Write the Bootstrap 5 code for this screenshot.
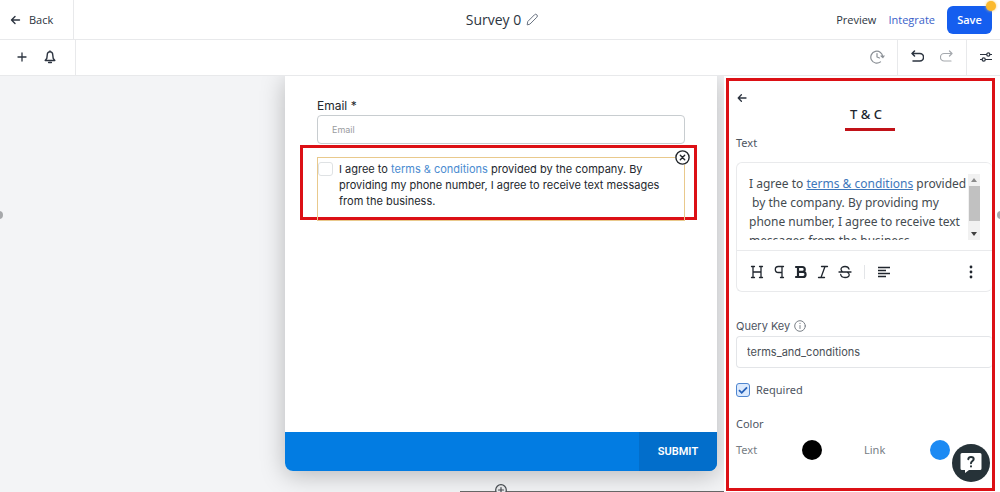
<!DOCTYPE html>
<html lang="en">
<head>
<meta charset="utf-8">
<meta name="viewport" content="width=device-width, initial-scale=1">
<title>Survey 0</title>
<link href="https://cdn.jsdelivr.net/npm/bootstrap@5.3.0/dist/css/bootstrap.min.css" rel="stylesheet">
<style>
  :root { --ui: "Noto Sans", "Open Sans", sans-serif; --form: Inter, "Liberation Sans", sans-serif; --mark: #dc1015; }
  body { font: 11px/16px var(--ui); color: #2c3440; background: #fff; height: 100vh; overflow: hidden; }
  svg { display: block; stroke-linejoin: round; }
  svg:not([stroke]) { stroke: currentColor; }
  svg:not([fill]) { fill: none; }
  svg:not([stroke-linecap]) { stroke-linecap: round; }
  button { font: inherit; color: inherit; }
  .icon-btn { padding: 0; border: 0; background: none; }
  .rule { border: 0 solid #e8e9eb; }
  .top-bar { height: 40px; border-bottom-width: 1px; font-family: "Open Sans", sans-serif; }
  .tool-bar { height: 36px; border-bottom-width: 1px; }
  .back-cell { width: 74px; border-right-width: 1px; font-weight: 500; padding-left: 8px; }
  .add-cell { width: 76px; border-right-width: 1px; padding-left: 16px; padding-bottom: 2px; }
  .page-name { font-size: 14px; font-weight: 400; line-height: 20px; padding-left: 4px; }
  .top-links { font-weight: 500; }
  .top-links .integrate { color: #3a61c9; }
  .save-btn { width: 45px; height: 28px; border: 0; border-radius: 6px; background: #155eef; color: #fff; font-weight: 600; }
  .save-dot { width: 10px; height: 10px; top: -5px; right: -4px; background: #fbb92d; box-shadow: 0 0 3px #fbc95e; }
  .history-cell { width: 70px; border-left-width: 1px; border-right-width: 1px; }
  .history-cell, .settings-cell, .version-cell { padding-bottom: 2px; }
  .settings-cell { width: 33px; }

  .canvas { background: #f3f4f6; padding-left: 285px; padding-right: 7px; min-width: 0; }
  .form-card { height: 395px; border-radius: 0 0 8px 8px; background: #fff; box-shadow: 0 4px 24px rgba(0,0,0,.25); font-family: var(--form); }
  .form-body { padding: 21px 20px 0 15px; }
  .email-group { margin: 0 12px 0 17px; }
  .email-group label { font-size: 12px; line-height: 18px; color: #23272d; }
  .email-field { height: 29px; border: 1px solid #c8cdd0; border-radius: 4px; padding: 0 14px; font: 9px/16px var(--form); }
  .email-field::placeholder { color: #9a9c9f; opacity: 1; }
  .marked { border: 3px solid var(--mark); height: 75px; padding: 9px 9px 0 14px; margin-top: 1px; }
  .consent { border: 1px solid #e9c98c; height: 64px; padding: 3px 20px 0 0; gap: 6px; font-size: 11px; line-height: 16px; color: #23272d; }
  .consent input { appearance: none; width: 15px; height: 14px; margin: 1px 0 0 0; border: 1px solid #dfe2e4; border-radius: 3px; background: #fff; }
  .consent a { color: #4a8bd0; text-decoration: none; }
  .remove-btn { top: -8px; right: -6px; background: #fff; border-radius: 50%; }
  .submit-bar { height: 39px; background: #027ce2; border-radius: 0 0 8px 8px; overflow: hidden; }
  .submit-btn { width: 78px; border: 0; background: #026ecb; color: #fff; font: 600 11px/16px Roboto, sans-serif; }
  .next-step { left: 460px; right: 0; bottom: 0; height: 1px; background: #666; }
  .next-step button { left: 35px; bottom: -4px; }
  .grip { width: 8px; height: 8px; border-radius: 50%; background: #a6a8ab; top: 135px; }
  .grip-left { left: -5px; }
  .grip-right { right: -5px; }

  .side-panel { width: 276px; padding: 2px 5px 1px 2px; }
  .side-frame { border: 3px solid var(--mark); padding: 10px 0 0 7px; overflow: hidden; color: #4e555f; min-width: 0; }
  .side-title { width: 50px; margin: 1px 97px 0 auto; padding: 0 0 6px 5px; border-bottom: 3px solid #c11218; font-size: 13px; font-weight: 500; line-height: 16px; color: #20262e; white-space: nowrap; }
  .editor { border: 1px solid #e9eaec; border-right: 0; border-radius: 6px; height: 130px; margin-top: 11px; }
  .editor-view { height: 88px; padding: 11px 24px 10px 12px; border-bottom: 1px solid #e9eaec; }
  .editor-text { height: 66px; overflow: hidden; font-size: 12px; line-height: 19px; white-space: pre; color: #444b50; }
  .editor-text a { color: #3e77bb; }
  .scroll-track { width: 12px; height: 66px; background: #f1f1f1; right: 12px; top: 11px; }
  .scroll-thumb { width: 11px; height: 35px; background: #c1c1c1; }
  .format-row { height: 41px; padding: 0 15px 0 13px; color: #20262e; }
  .format-rule { width: 1px; height: 14px; background: #e3e5e8; }
  .key-field { height: 32px; border: 1px solid #e3e5e8; border-right: 0; border-radius: 4px; padding: 0 10px; font: 11px/16px var(--form); color: #4a4f56; width: 100%; }
  .key-label { font: 11px/16px var(--form); margin-top: 26px; margin-bottom: 2px; }
  .required-box { appearance: none; width: 14px; height: 14px; margin: 0; border: 1px solid #4f86d0; border-radius: 3px; background: #dceafd url("data:image/svg+xml,%3Csvg xmlns='http://www.w3.org/2000/svg' viewBox='0 0 12 12'%3E%3Cpath d='M2 6.2l2.7 2.6L10 3.3' fill='none' stroke='%232560b8' stroke-width='1.8'/%3E%3C/svg%3E") center / 12px no-repeat; }
  .required-row { margin-top: 14px; gap: 6px; }
  .color-title { margin-top: 18px; }
  .swatch { width: 20px; height: 20px; border: 0; border-radius: 50%; padding: 0; }
  .color-row { color: #777d85; margin-top: 8px; }
  .color-row label { width: 66px; }
  .color-row .swatch + label { margin-left: 42px; }
  .help-btn { width: 38px; height: 38px; border: 0; border-radius: 50%; padding: 0; background: #263238; right: 10px; bottom: 10px; }
</style>
</head>
<body class="d-flex flex-column">

<header class="top-bar rule d-flex align-items-stretch position-relative">
  <button class="icon-btn back-cell rule d-flex align-items-center" type="button">
    <svg class="me-2" width="13" height="12" viewBox="1 0 13 12" stroke-width="1.4"><path d="M12.500 6H4.500M8 2.500L4.500 6 8 9.500"/></svg>Back
  </button>
  <div class="flex-fill d-flex align-items-center justify-content-end pe-2">
    <nav class="top-links d-flex align-items-center">
      <a class="text-reset text-decoration-none me-2 pe-1" href="#">Preview</a>
      <a class="integrate text-decoration-none me-2 pe-1" href="#">Integrate</a>
    </nav>
    <button class="save-btn position-relative p-0" type="button">Save<span class="save-dot position-absolute rounded-circle"></span></button>
  </div>
  <div class="position-absolute top-50 start-50 translate-middle d-flex align-items-center">
    <h1 class="page-name m-0 me-1">Survey 0</h1>
    <button class="icon-btn" type="button" aria-label="Rename">
      <svg width="13" height="13" viewBox="0 0 13 13" stroke-width="1" stroke="#697280"><path d="M1.500 11.500l.5-3 6.700-6.700a1.600 1.600 0 0 1 2.400 2.400L4.400 10.900z"/></svg>
    </button>
  </div>
</header>

<div class="tool-bar rule d-flex align-items-stretch">
  <div class="add-cell rule d-flex align-items-center gap-3">
    <button class="icon-btn" type="button" aria-label="Add"><svg width="12" height="12" viewBox="0 0 12 12" stroke-width="1.3"><path d="M6 2v8M2 6h8"/></svg></button>
    <button class="icon-btn" type="button" aria-label="Notifications"><svg width="12" height="14" viewBox="0 0 12 14" stroke-width="1.4"><path d="M1.200 10.500h9.600L9.200 8.300 8.700 4.500a2.700 2.700 0 0 0-5.400 0L2.800 8.300zM4.600 12.500h2.800M6 1v.8"/></svg></button>
  </div>
  <div class="version-cell ms-auto d-flex align-items-center pe-2 me-1">
    <button class="icon-btn" type="button" aria-label="Version history"><svg width="15" height="14" viewBox="0 0 15 14" stroke="#8b9096" stroke-width="1.200"><path d="M10.500 11.900A6 6 0 1 1 12.800 7M11.100 6l1.800 1.500L14 5.800M7 3.500V7l2.500 1"/></svg></button>
  </div>
  <div class="history-cell rule d-flex align-items-center justify-content-center gap-3">
    <button class="icon-btn" type="button" aria-label="Undo"><svg width="13" height="13" viewBox="0 0 13 13" stroke-width="1.500"><path d="M3.500 1L1 3.500 3.500 6M1 3.500h7.800a3.600 3.600 0 0 1 0 7.500H2"/></svg></button>
    <button class="icon-btn" type="button" aria-label="Redo"><svg width="13" height="13" viewBox="0 0 13 13" stroke="#a5a9ae" stroke-width="1.200"><path d="M9.500 1L12 3.500 9.500 6M12 3.500H4.200a3.600 3.600 0 0 0 0 7.500H11"/></svg></button>
  </div>
  <div class="settings-cell d-flex align-items-center justify-content-end pe-2">
    <button class="icon-btn" type="button" aria-label="Settings"><svg width="12" height="10" viewBox="0 0 12 10" stroke-width="1.200"><path d="M.5 2.500h6M10 2.500h1.500M.5 7.500H2M5.500 7.500h6"/><circle cx="8.300" cy="2.500" r="1.600"/><circle cx="3.700" cy="7.500" r="1.600"/></svg></button>
  </div>
</div>

<main class="flex-fill d-flex position-relative overflow-hidden">
  <section class="canvas flex-fill position-relative overflow-hidden">
    <form class="form-card d-flex flex-column">
      <div class="form-body flex-fill">
        <div class="email-group">
          <label class="d-block" for="email">Email *</label>
          <input class="email-field w-100 d-block" id="email" type="email" placeholder="Email">
        </div>
        <div class="marked">
          <div class="consent d-flex align-items-start position-relative">
            <input class="flex-shrink-0" id="agree" type="checkbox">
            <label for="agree">I agree to <a href="#">terms &amp; conditions</a> provided by the company. By providing my phone number, I agree to receive text messages from the business.</label>
            <button class="icon-btn remove-btn position-absolute" type="button" aria-label="Remove field"><svg width="15" height="15" viewBox="0 0 15 15" stroke="#22262b" stroke-width="1.400"><circle cx="7.500" cy="7.500" r="6.600"/><path d="M5.300 5.300l4.400 4.400M9.700 5.300L5.300 9.700"/></svg></button>
          </div>
        </div>
      </div>
      <div class="submit-bar d-flex justify-content-end">
        <button class="submit-btn" type="button">SUBMIT</button>
      </div>
    </form>
    <div class="next-step position-absolute">
      <button class="icon-btn position-absolute" type="button" aria-label="Add step"><svg width="12" height="12" viewBox="0 0 12 12" stroke="#44494e" stroke-width="1.200"><circle cx="6" cy="6" r="5.300" fill="#e4e5e7"/><path d="M6 3.500v5M3.500 6h5"/></svg></button>
    </div>
  </section>

  <aside class="side-panel d-flex flex-shrink-0">
    <div class="side-frame flex-fill">
      <button class="icon-btn d-block" type="button" aria-label="Back to fields"><svg width="12" height="14" viewBox="0 0 12 14" stroke="#2c3440" stroke-width="1.300"><path d="M10 7H2.200M5.400 3.700L2.200 7l3.200 3.300"/></svg></button>
      <h2 class="side-title">T &amp; C</h2>
      <div class="mt-1" id="text-label">Text</div>
      <div class="editor position-relative">
        <div class="editor-view">
          <div class="editor-text" role="textbox" contenteditable="true" aria-multiline="true" aria-labelledby="text-label">I agree to <a href="#">terms &amp; conditions</a> provided
 by the company. By providing my
phone number, I agree to receive text
messages from the business.</div>
          <div class="scroll-track position-absolute d-flex flex-column align-items-center justify-content-between py-1" aria-hidden="true">
            <svg width="6" height="4" viewBox="0 0 6 4" stroke="none" fill="#8a8a8a"><path d="M0 4l3-4 3 4z"/></svg>
            <div class="scroll-thumb mb-2"></div>
            <svg width="6" height="4" viewBox="0 0 6 4" stroke="none" fill="#404040"><path d="M0 0l3 4 3-4z"/></svg>
          </div>
        </div>
        <div class="format-row d-flex align-items-center">
          <button class="icon-btn me-2" type="button" aria-label="Heading"><svg width="14" height="14" viewBox="0 0 14 14" stroke-width="1.300"><path d="M1.500 1.500h3M9.500 1.500h3M1.500 12.500h3M9.500 12.500h3M3 1.500v11M11 1.500v11M3 7h8"/></svg></button>
          <button class="icon-btn me-2" type="button" aria-label="Paragraph"><svg width="14" height="14" viewBox="0 0 14 14" stroke-width="1.300"><path d="M11.500 1.500H6.300a3 3 0 0 0 0 6H10M10 1.500v11M8.500 12.500h3"/></svg></button>
          <button class="icon-btn me-2" type="button" aria-label="Bold"><svg width="14" height="14" viewBox="0 0 14 14" stroke-width="2.200"><path d="M2 2h6.300a2.400 2.400 0 0 1 0 4.900H4M4 2v10M4 6.900h5a2.500 2.500 0 0 1 0 5.100H2"/></svg></button>
          <button class="icon-btn me-2" type="button" aria-label="Italic"><svg width="14" height="14" viewBox="0 0 14 14" stroke-width="1.300"><path d="M5.500 1.500h6M2.500 12.500h6M9 1.500l-4 11"/></svg></button>
          <button class="icon-btn me-2" type="button" aria-label="Strikethrough"><svg width="14" height="14" viewBox="0 0 14 14" stroke-width="1.300"><path d="M11 4.200C10.500 2.300 9 1.500 7 1.500c-2.300 0-4 1-4 2.800C3 5.500 3.800 6.400 5 7M1 7h12M9.500 7.500c1.200.5 1.700 1.200 1.700 2.200 0 1.800-1.800 2.800-4.200 2.800-2.300 0-4-1-4.300-3"/></svg></button>
          <span class="format-rule ms-1 me-2"></span>
          <button class="icon-btn ms-1" type="button" aria-label="Align left"><svg width="14" height="12" viewBox="0 0 14 12" stroke-width="1.400" stroke-linecap="butt"><path d="M1 1.500h12M1 4.500h8M1 7.500h12M1 10.500h8"/></svg></button>
          <button class="icon-btn ms-auto" type="button" aria-label="More"><svg width="12" height="14" viewBox="0 0 12 14" stroke="none" fill="#20262e"><circle cx="6" cy="2" r="1.400"/><circle cx="6" cy="7" r="1.400"/><circle cx="6" cy="12" r="1.400"/></svg></button>
        </div>
      </div>
      <div class="key-label d-flex align-items-center gap-1">
        <label for="query-key">Query Key</label>
        <svg width="12" height="12" viewBox="0 0 12 12" stroke="#7b8188" stroke-width="1"><circle cx="6" cy="6" r="5.300"/><path d="M6 5.500v3M6 3.300v.3"/></svg>
      </div>
      <input class="key-field d-block" id="query-key" type="text" value="terms_and_conditions">
      <div class="required-row d-flex align-items-center">
        <input class="required-box" id="required" type="checkbox" checked>
        <label for="required">Required</label>
      </div>
      <div class="color-title">Color</div>
      <div class="color-row d-flex align-items-center">
        <label for="text-color">Text</label>
        <button class="swatch" id="text-color" type="button" style="background:#000"></button>
        <label for="link-color">Link</label>
        <button class="swatch" id="link-color" type="button" style="background:#1c8af3"></button>
      </div>
    </div>
  </aside>

  <span class="grip grip-left position-absolute"></span>
  <span class="grip grip-right position-absolute"></span>
  <button class="help-btn position-absolute d-flex align-items-center justify-content-center" type="button" aria-label="Help">
    <svg width="24" height="24" viewBox="0 0 24 24" stroke="none"><path fill="#fff" d="M3 2h18a1.500 1.500 0 0 1 1.500 1.500v14A1.500 1.500 0 0 1 21 19H10l-4 3v-3H3a1.500 1.500 0 0 1-1.500-1.500v-14A1.500 1.500 0 0 1 3 2z"/><path fill="none" stroke="#263238" stroke-width="2" d="M9.300 8.200c.2-1.500 1.200-2.300 2.700-2.300s2.700.8 2.700 2.200c0 1.900-2.700 2-2.700 4.200M12 15.300v.2"/></svg>
  </button>
</main>

<script src="https://cdn.jsdelivr.net/npm/bootstrap@5.3.0/dist/js/bootstrap.bundle.min.js"></script>
</body>
</html>
